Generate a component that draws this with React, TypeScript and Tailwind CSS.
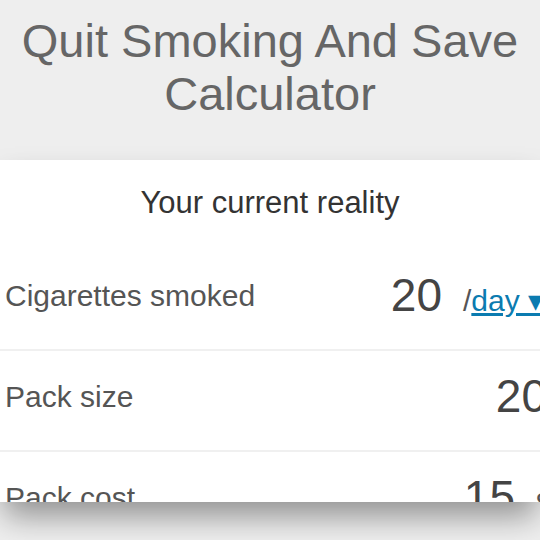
import React from 'react';

type Row = {
  label: string;
  value: string;
  unit?: React.ReactNode;
  unitWidth: string;
};

const rows: Row[] = [
  {
    label: 'Cigarettes smoked',
    value: '20',
    unitWidth: 'w-[158px]',
    unit: (
      <span className="text-[30px] text-[#555]">
        /<a href="#" className="text-[#0b7bb0] underline">day ▾</a>
      </span>
    ),
  },
  { label: 'Pack size', value: '20', unitWidth: 'w-[53px]' },
  {
    label: 'Pack cost',
    value: '15',
    unitWidth: 'w-[85px]',
    unit: <span className="text-[30px] text-[#555]">$</span>,
  },
];

export default function App() {
  return (
    <div
      className="h-[540px] w-[540px] overflow-hidden bg-[#efefef]"
      style={{ fontFamily: '"Liberation Sans", Arial, sans-serif' }}
    >
      {/* Page title */}
      <header className="h-[160px] bg-[#eeeeee] pt-[14px] text-center">
        <h1 className="text-[47px] leading-[53px] text-[#666]">
          Quit Smoking And Save
          <br />
          Calculator
        </h1>
      </header>

      {/* Calculator panel */}
      <section className="relative z-10 h-[342px] overflow-hidden bg-white shadow-[0_18px_30px_-4px_rgba(0,0,0,0.4)]">
        <h2 className="h-[90px] pt-[25px] text-center text-[31px] leading-[36px] text-[#333]">
          Your current reality
        </h2>
        <div className="w-[600px]">
          {rows.map((row) => (
            <div
              key={row.label}
              className="flex h-[101px] items-center border-b-2 border-[#f0f0f0] pb-[8px] pl-[5px]"
            >
              <span className="text-[30px] text-[#555]">{row.label}</span>
              <div className="ml-auto flex items-baseline">
                <span className="text-[46px] text-[#444]">{row.value}</span>
                <span className={`${row.unitWidth} whitespace-nowrap pl-[21px]`}>{row.unit}</span>
              </div>
            </div>
          ))}
        </div>
      </section>
    </div>
  );
}
